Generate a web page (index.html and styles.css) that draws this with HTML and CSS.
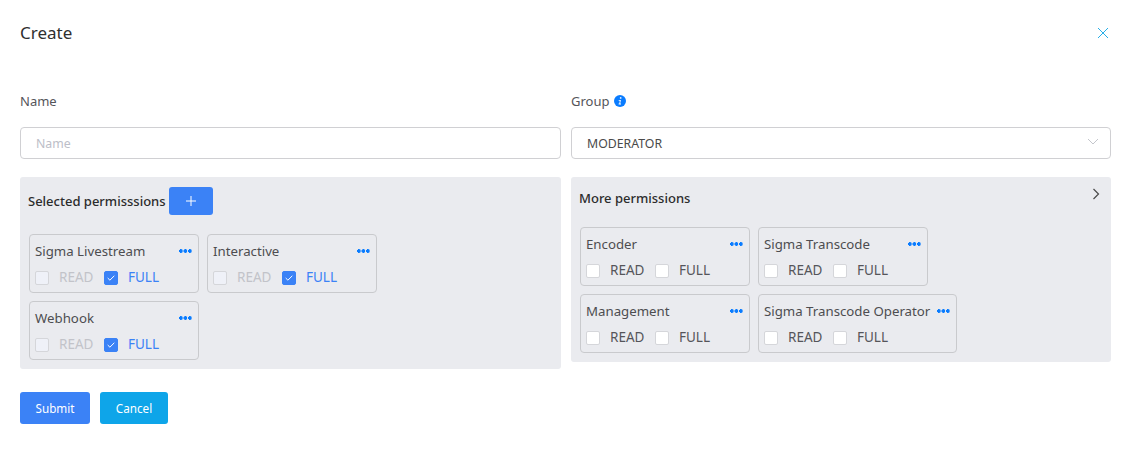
FILE: index.html
```html
<!DOCTYPE html>
<html lang="en">
<head>
  <meta charset="UTF-8" />
  <title>Create</title>
  <link rel="stylesheet" href="styles.css">
</head>
<body>
  <div class="modal">
    <div class="modal-header">
      <h3>Create</h3>
      <svg class="close-icon" width="12" height="12" viewBox="0 0 12 12"><path d="M1 1l10 10M11 1L1 11" /></svg>
    </div>

    <div class="form-grid">
      <div class="field">
        <label>Name</label>
        <input type="text" placeholder="Name" />
      </div>
      <div class="field">
        <label>Group
          <svg class="info-icon" width="12" height="12" viewBox="0 0 12 12"><circle cx="6" cy="6" r="6" /><rect x="5.9" y="2.2" width="1.5" height="1.5" /><path d="M4.7 5h2.2l-.7 3.6h.8v.8H4.6v-.8h.7l.5-2.8h-1.1z" /></svg>
        </label>
        <div class="select">
          <span>MODERATOR</span>
          <svg width="12" height="7" viewBox="0 0 12 7"><path d="M1 1l5 5 5-5" /></svg>
        </div>
      </div>

      <div class="panel">
        <div class="panel-head selected-head">
          <strong>Selected permisssions</strong>
          <button class="add-btn" type="button">
            <svg width="12" height="12" viewBox="0 0 12 12"><path d="M6 1v10M1 6h10" /></svg>
          </button>
        </div>
        <div class="cards">
          <div class="card">
            <div class="card-top"><span>Sigma Livestream</span><i class="dots"></i></div>
            <div class="card-opts">
              <i class="box disabled"></i><span class="opt muted">READ</span>
              <i class="box checked"><svg width="8" height="6" viewBox="0 0 8 6"><path d="M.7 3l2.2 2.2L7.3.8" /></svg></i><span class="opt active">FULL</span>
            </div>
          </div>
          <div class="card">
            <div class="card-top"><span>Interactive</span><i class="dots"></i></div>
            <div class="card-opts">
              <i class="box disabled"></i><span class="opt muted">READ</span>
              <i class="box checked"><svg width="8" height="6" viewBox="0 0 8 6"><path d="M.7 3l2.2 2.2L7.3.8" /></svg></i><span class="opt active">FULL</span>
            </div>
          </div>
          <div class="card">
            <div class="card-top"><span>Webhook</span><i class="dots"></i></div>
            <div class="card-opts">
              <i class="box disabled"></i><span class="opt muted">READ</span>
              <i class="box checked"><svg width="8" height="6" viewBox="0 0 8 6"><path d="M.7 3l2.2 2.2L7.3.8" /></svg></i><span class="opt active">FULL</span>
            </div>
          </div>
        </div>
      </div>

      <div class="panel">
        <div class="panel-head more-head">
          <strong>More permissions</strong>
          <svg class="chevron" width="8" height="12" viewBox="0 0 8 12"><path d="M1.5 1l5 5-5 5" /></svg>
        </div>
        <div class="cards">
          <div class="card">
            <div class="card-top"><span>Encoder</span><i class="dots"></i></div>
            <div class="card-opts">
              <i class="box"></i><span class="opt">READ</span>
              <i class="box"></i><span class="opt">FULL</span>
            </div>
          </div>
          <div class="card">
            <div class="card-top"><span>Sigma Transcode</span><i class="dots"></i></div>
            <div class="card-opts">
              <i class="box"></i><span class="opt">READ</span>
              <i class="box"></i><span class="opt">FULL</span>
            </div>
          </div>
          <div class="card">
            <div class="card-top"><span>Management</span><i class="dots"></i></div>
            <div class="card-opts">
              <i class="box"></i><span class="opt">READ</span>
              <i class="box"></i><span class="opt">FULL</span>
            </div>
          </div>
          <div class="card card-wide">
            <div class="card-top"><span>Sigma Transcode Operator</span><i class="dots"></i></div>
            <div class="card-opts">
              <i class="box"></i><span class="opt">READ</span>
              <i class="box"></i><span class="opt">FULL</span>
            </div>
          </div>
        </div>
      </div>
    </div>

    <div class="actions">
      <button class="btn submit" type="button">Submit</button>
      <button class="btn cancel" type="button">Cancel</button>
    </div>
  </div>
</body>
</html>
```

FILE: styles.css
```css
* {
  box-sizing: border-box;
}
body {
  margin: 0;
  font-family: "Noto Sans", "Open Sans", sans-serif;
  background: #fff;
  color: #4a4a4a;
  font-size: 14px;
}
.modal {
  padding: 0 20px;
  height: 471px;
}
.modal-header {
  display: flex;
  justify-content: space-between;
  align-items: center;
  height: 66px;
}
.modal-header h3 {
  margin: 0 0 2px;
  font-size: 17px;
  font-weight: 400;
  color: #2f2f2f;
}
.close-icon {
  margin-right: 2px;
  fill: none;
  stroke: #27aee8;
  stroke-width: 1;
}
.form-grid {
  display: grid;
  grid-template-columns: 541px 540px;
  column-gap: 10px;
  align-items: start;
}
.field label {
  display: flex;
  align-items: center;
  gap: 5px;
  height: 20px;
  margin-top: 25px;
  margin-bottom: 16px;
  font-size: 13px;
  color: #55555a;
}
.info-icon circle {
  fill: #0a7cff;
}
.info-icon rect,
.info-icon path {
  fill: #fff;
}
.field input,
.select {
  display: flex;
  align-items: center;
  justify-content: space-between;
  width: 100%;
  height: 32px;
  padding: 0 15px;
  border: 1px solid #d0d0d3;
  border-radius: 4px;
  background: #fff;
  font-family: inherit;
  font-size: 12.3px;
  color: #4a4a4a;
  outline: none;
}
.field input::placeholder {
  color: #bcbec8;
  opacity: 1;
}
.select svg {
  margin: 0 -4px 3px 0;
  fill: none;
  stroke: #c4c6cc;
  stroke-width: 1;
}
.panel {
  margin-top: 18px;
  padding: 0 9px 9px;
  background: #eaebef;
  border-radius: 3px;
}
.panel-head {
  display: flex;
  align-items: center;
  margin-left: -1px;
  color: #2c2c2c;
}
.panel-head strong {
  font-size: 13px;
  font-weight: 500;
}
.selected-head {
  height: 57px;
  gap: 3px;
  padding-bottom: 10px;
}
.more-head {
  height: 50px;
  justify-content: space-between;
  padding-bottom: 8px;
}
.add-btn {
  width: 44px;
  height: 28px;
  padding: 0;
  border: none;
  border-radius: 3px;
  background: #3b82f6;
  display: flex;
  align-items: center;
  justify-content: center;
}
.add-btn svg {
  fill: none;
  stroke: #fff;
  stroke-width: 1;
}
.chevron {
  fill: none;
  stroke: #4a4a4a;
  stroke-width: 1.2;
  margin: 0 2px 9px 0;
}
.cards {
  display: flex;
  flex-wrap: wrap;
  gap: 8px;
}
.card {
  width: 170px;
  height: 59px;
  padding: 0 5px;
  border: 1px solid #c9cacd;
  border-radius: 4px;
}
.card-wide {
  width: 199px;
}
.card-top {
  display: flex;
  justify-content: space-between;
  align-items: center;
  height: 31px;
  margin-bottom: 2px;
  font-size: 13.25px;
  color: #4d4d50;
}
.dots {
  display: block;
  width: 13px;
  height: 4px;
  margin-right: 1px;
  background: radial-gradient(circle at 2px 2px, #0a7cff 1.7px, transparent 2px) 0 0 / 4.5px 4px repeat-x;
}
.card-opts {
  display: flex;
  align-items: center;
  height: 20px;
  font-size: 13.5px;
}
.box {
  display: flex;
  align-items: center;
  justify-content: center;
  width: 14px;
  height: 14px;
  border: 1px solid #d5d6da;
  border-radius: 2px;
  background: #fff;
}
.box.disabled {
  background: #eff1f8;
}
.box.checked {
  background: #3b82f6;
  border-color: #3b82f6;
}
.box svg {
  fill: none;
  stroke: #fff;
  stroke-width: 1;
}
.opt {
  width: 55px;
  margin-top: -2px;
  padding-left: 10px;
  color: #55555a;
}
.opt:last-child {
  width: auto;
}
.opt.muted {
  color: #c2c3c9;
}
.opt.active {
  color: #3b82f6;
}
.actions {
  display: flex;
  gap: 10px;
  margin-top: 23px;
}
.btn {
  height: 32px;
  border: none;
  border-radius: 3px;
  color: #fff;
  font-family: inherit;
  font-size: 11.7px;
}
.submit {
  width: 70px;
  background: #3b82f6;
}
.cancel {
  width: 68px;
  background: #0ea5e9;
}
```
